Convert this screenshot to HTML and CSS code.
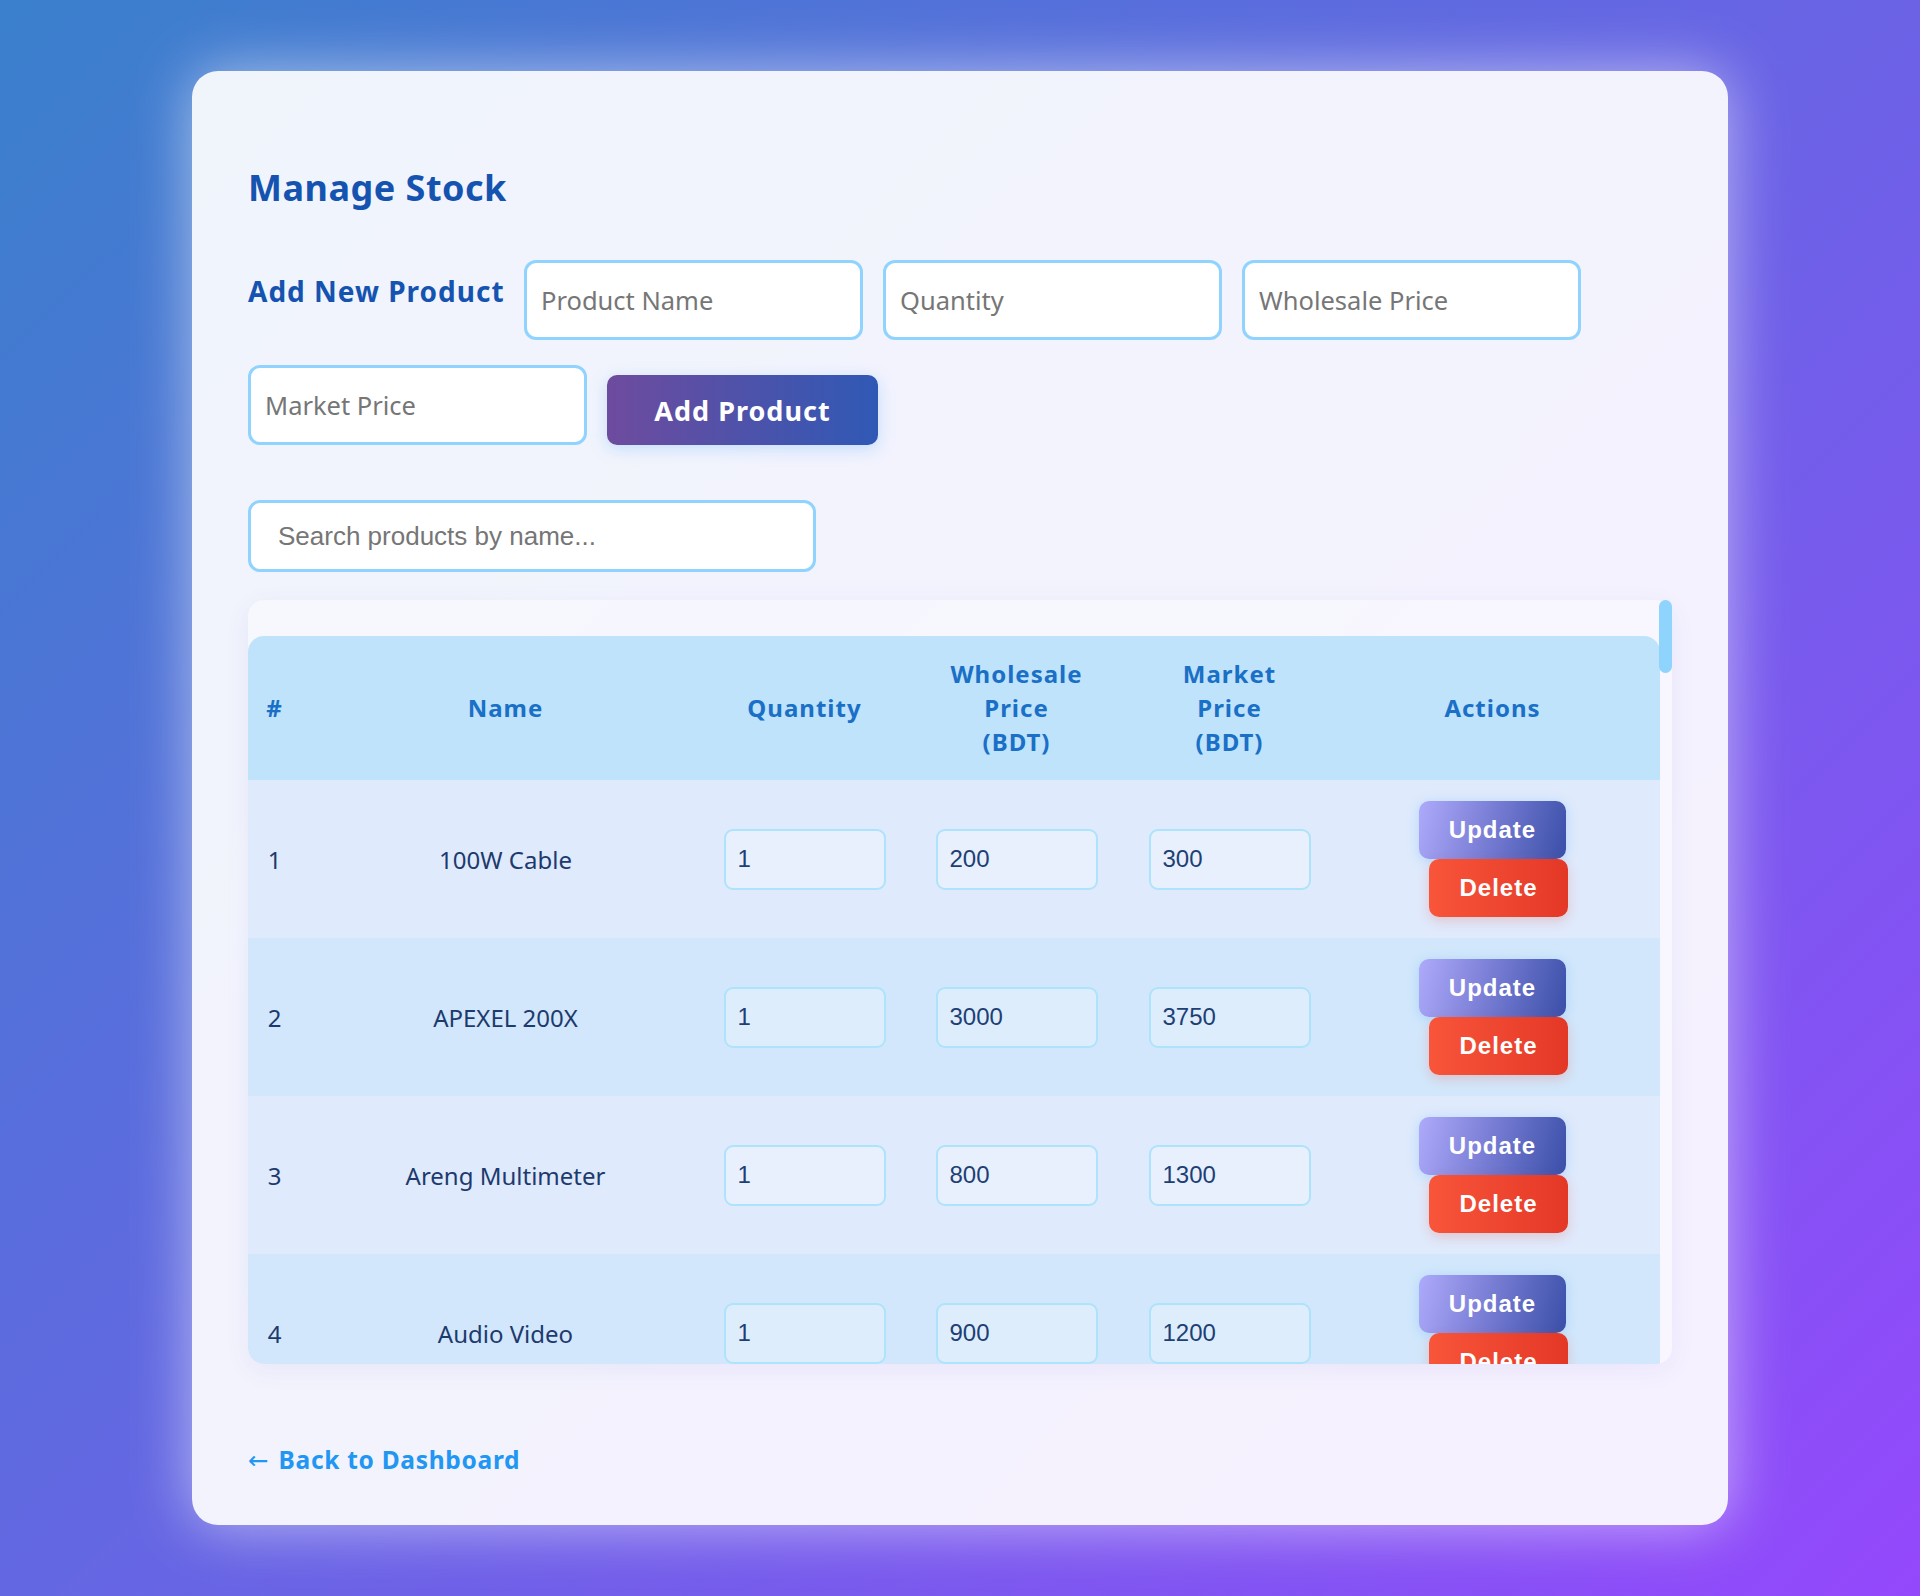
FILE: index.html
```html
<!DOCTYPE html>
<html lang="en">
<head>
<meta charset="utf-8">
<title>Manage Stock</title>
<link rel="stylesheet" href="styles.css">
</head>
<body>
<main class="card">
  <h1 class="title">Manage Stock</h1>

  <form class="add-form">
    <h2 class="add-label">Add New Product</h2>
    <input class="field" type="text" placeholder="Product Name">
    <input class="field" type="text" placeholder="Quantity">
    <input class="field" type="text" placeholder="Wholesale Price">
    <input class="field" type="text" placeholder="Market Price">
    <button class="add-btn" type="button">Add Product</button>
  </form>

  <input class="search" type="text" placeholder="Search products by name...">

  <div class="table-shell">
    <div class="table-wrap">
      <table class="stock-table">
        <colgroup>
          <col class="c-num"><col class="c-name"><col class="c-qty"><col class="c-whole"><col class="c-market"><col class="c-actions">
        </colgroup>
        <thead>
          <tr>
            <th>#</th>
            <th>Name</th>
            <th>Quantity</th>
            <th>Wholesale<br>Price<br>(BDT)</th>
            <th>Market<br>Price<br>(BDT)</th>
            <th>Actions</th>
          </tr>
        </thead>
        <tbody>
          <tr><td>1</td><td>100W Cable</td><td><input class="cell-input" value="1"></td><td><input class="cell-input" value="200"></td><td><input class="cell-input" value="300"></td><td class="act-cell"><div class="actions"><button class="btn btn-update" type="button">Update</button><button class="btn btn-delete" type="button">Delete</button></div></td></tr>
          <tr><td>2</td><td>APEXEL 200X</td><td><input class="cell-input" value="1"></td><td><input class="cell-input" value="3000"></td><td><input class="cell-input" value="3750"></td><td class="act-cell"><div class="actions"><button class="btn btn-update" type="button">Update</button><button class="btn btn-delete" type="button">Delete</button></div></td></tr>
          <tr><td>3</td><td>Areng Multimeter</td><td><input class="cell-input" value="1"></td><td><input class="cell-input" value="800"></td><td><input class="cell-input" value="1300"></td><td class="act-cell"><div class="actions"><button class="btn btn-update" type="button">Update</button><button class="btn btn-delete" type="button">Delete</button></div></td></tr>
          <tr><td>4</td><td>Audio Video</td><td><input class="cell-input" value="1"></td><td><input class="cell-input" value="900"></td><td><input class="cell-input" value="1200"></td><td class="act-cell"><div class="actions"><button class="btn btn-update" type="button">Update</button><button class="btn btn-delete" type="button">Delete</button></div></td></tr>
          <tr><td>5</td><td>Battery Holder 18650</td><td><input class="cell-input" value="4"></td><td><input class="cell-input" value="60"></td><td><input class="cell-input" value="90"></td><td class="act-cell"><div class="actions"><button class="btn btn-update" type="button">Update</button><button class="btn btn-delete" type="button">Delete</button></div></td></tr>
          <tr><td>6</td><td>Bluetooth Module HC-05</td><td><input class="cell-input" value="2"></td><td><input class="cell-input" value="350"></td><td><input class="cell-input" value="450"></td><td class="act-cell"><div class="actions"><button class="btn btn-update" type="button">Update</button><button class="btn btn-delete" type="button">Delete</button></div></td></tr>
          <tr><td>7</td><td>Breadboard 830</td><td><input class="cell-input" value="5"></td><td><input class="cell-input" value="120"></td><td><input class="cell-input" value="180"></td><td class="act-cell"><div class="actions"><button class="btn btn-update" type="button">Update</button><button class="btn btn-delete" type="button">Delete</button></div></td></tr>
          <tr><td>8</td><td>Buck Converter LM2596</td><td><input class="cell-input" value="3"></td><td><input class="cell-input" value="110"></td><td><input class="cell-input" value="160"></td><td class="act-cell"><div class="actions"><button class="btn btn-update" type="button">Update</button><button class="btn btn-delete" type="button">Delete</button></div></td></tr>
          <tr><td>9</td><td>Buzzer 5V</td><td><input class="cell-input" value="10"></td><td><input class="cell-input" value="15"></td><td><input class="cell-input" value="25"></td><td class="act-cell"><div class="actions"><button class="btn btn-update" type="button">Update</button><button class="btn btn-delete" type="button">Delete</button></div></td></tr>
          <tr><td>10</td><td>Capacitor Kit</td><td><input class="cell-input" value="2"></td><td><input class="cell-input" value="250"></td><td><input class="cell-input" value="350"></td><td class="act-cell"><div class="actions"><button class="btn btn-update" type="button">Update</button><button class="btn btn-delete" type="button">Delete</button></div></td></tr>
          <tr><td>11</td><td>DC Jack Female</td><td><input class="cell-input" value="20"></td><td><input class="cell-input" value="10"></td><td><input class="cell-input" value="20"></td><td class="act-cell"><div class="actions"><button class="btn btn-update" type="button">Update</button><button class="btn btn-delete" type="button">Delete</button></div></td></tr>
          <tr><td>12</td><td>DC Motor 12V</td><td><input class="cell-input" value="3"></td><td><input class="cell-input" value="180"></td><td><input class="cell-input" value="250"></td><td class="act-cell"><div class="actions"><button class="btn btn-update" type="button">Update</button><button class="btn btn-delete" type="button">Delete</button></div></td></tr>
          <tr><td>13</td><td>Digital Caliper</td><td><input class="cell-input" value="1"></td><td><input class="cell-input" value="900"></td><td><input class="cell-input" value="1250"></td><td class="act-cell"><div class="actions"><button class="btn btn-update" type="button">Update</button><button class="btn btn-delete" type="button">Delete</button></div></td></tr>
          <tr><td>14</td><td>DS18B20 Sensor</td><td><input class="cell-input" value="4"></td><td><input class="cell-input" value="90"></td><td><input class="cell-input" value="140"></td><td class="act-cell"><div class="actions"><button class="btn btn-update" type="button">Update</button><button class="btn btn-delete" type="button">Delete</button></div></td></tr>
          <tr><td>15</td><td>ESP32 DevKit</td><td><input class="cell-input" value="2"></td><td><input class="cell-input" value="550"></td><td><input class="cell-input" value="750"></td><td class="act-cell"><div class="actions"><button class="btn btn-update" type="button">Update</button><button class="btn btn-delete" type="button">Delete</button></div></td></tr>
          <tr><td>16</td><td>ESP8266 NodeMCU</td><td><input class="cell-input" value="3"></td><td><input class="cell-input" value="380"></td><td><input class="cell-input" value="500"></td><td class="act-cell"><div class="actions"><button class="btn btn-update" type="button">Update</button><button class="btn btn-delete" type="button">Delete</button></div></td></tr>
          <tr><td>17</td><td>Female Header Pins</td><td><input class="cell-input" value="15"></td><td><input class="cell-input" value="12"></td><td><input class="cell-input" value="20"></td><td class="act-cell"><div class="actions"><button class="btn btn-update" type="button">Update</button><button class="btn btn-delete" type="button">Delete</button></div></td></tr>
          <tr><td>18</td><td>Flux Paste</td><td><input class="cell-input" value="2"></td><td><input class="cell-input" value="80"></td><td><input class="cell-input" value="120"></td><td class="act-cell"><div class="actions"><button class="btn btn-update" type="button">Update</button><button class="btn btn-delete" type="button">Delete</button></div></td></tr>
          <tr><td>19</td><td>HDMI Cable</td><td><input class="cell-input" value="2"></td><td><input class="cell-input" value="200"></td><td><input class="cell-input" value="300"></td><td class="act-cell"><div class="actions"><button class="btn btn-update" type="button">Update</button><button class="btn btn-delete" type="button">Delete</button></div></td></tr>
          <tr><td>20</td><td>Heat Shrink Tube</td><td><input class="cell-input" value="5"></td><td><input class="cell-input" value="40"></td><td><input class="cell-input" value="70"></td><td class="act-cell"><div class="actions"><button class="btn btn-update" type="button">Update</button><button class="btn btn-delete" type="button">Delete</button></div></td></tr>
          <tr><td>21</td><td>IR Sensor Module</td><td><input class="cell-input" value="6"></td><td><input class="cell-input" value="45"></td><td><input class="cell-input" value="70"></td><td class="act-cell"><div class="actions"><button class="btn btn-update" type="button">Update</button><button class="btn btn-delete" type="button">Delete</button></div></td></tr>
          <tr><td>22</td><td>Jumper Wire Set</td><td><input class="cell-input" value="4"></td><td><input class="cell-input" value="90"></td><td><input class="cell-input" value="140"></td><td class="act-cell"><div class="actions"><button class="btn btn-update" type="button">Update</button><button class="btn btn-delete" type="button">Delete</button></div></td></tr>
          <tr><td>23</td><td>LCD 16x2 Display</td><td><input class="cell-input" value="2"></td><td><input class="cell-input" value="220"></td><td><input class="cell-input" value="300"></td><td class="act-cell"><div class="actions"><button class="btn btn-update" type="button">Update</button><button class="btn btn-delete" type="button">Delete</button></div></td></tr>
          <tr><td>24</td><td>LED Pack 5mm</td><td><input class="cell-input" value="8"></td><td><input class="cell-input" value="50"></td><td><input class="cell-input" value="80"></td><td class="act-cell"><div class="actions"><button class="btn btn-update" type="button">Update</button><button class="btn btn-delete" type="button">Delete</button></div></td></tr>
          <tr><td>25</td><td>Li-ion Charger TP4056</td><td><input class="cell-input" value="6"></td><td><input class="cell-input" value="35"></td><td><input class="cell-input" value="60"></td><td class="act-cell"><div class="actions"><button class="btn btn-update" type="button">Update</button><button class="btn btn-delete" type="button">Delete</button></div></td></tr>
          <tr><td>26</td><td>Logic Analyzer</td><td><input class="cell-input" value="1"></td><td><input class="cell-input" value="700"></td><td><input class="cell-input" value="950"></td><td class="act-cell"><div class="actions"><button class="btn btn-update" type="button">Update</button><button class="btn btn-delete" type="button">Delete</button></div></td></tr>
          <tr><td>27</td><td>Micro USB Cable</td><td><input class="cell-input" value="5"></td><td><input class="cell-input" value="60"></td><td><input class="cell-input" value="100"></td><td class="act-cell"><div class="actions"><button class="btn btn-update" type="button">Update</button><button class="btn btn-delete" type="button">Delete</button></div></td></tr>
          <tr><td>28</td><td>Mini Drill</td><td><input class="cell-input" value="1"></td><td><input class="cell-input" value="650"></td><td><input class="cell-input" value="900"></td><td class="act-cell"><div class="actions"><button class="btn btn-update" type="button">Update</button><button class="btn btn-delete" type="button">Delete</button></div></td></tr>
          <tr><td>29</td><td>OLED 0.96 Display</td><td><input class="cell-input" value="3"></td><td><input class="cell-input" value="260"></td><td><input class="cell-input" value="350"></td><td class="act-cell"><div class="actions"><button class="btn btn-update" type="button">Update</button><button class="btn btn-delete" type="button">Delete</button></div></td></tr>
          <tr><td>30</td><td>Power Bank Module</td><td><input class="cell-input" value="2"></td><td><input class="cell-input" value="150"></td><td><input class="cell-input" value="220"></td><td class="act-cell"><div class="actions"><button class="btn btn-update" type="button">Update</button><button class="btn btn-delete" type="button">Delete</button></div></td></tr>
          <tr><td>31</td><td>Relay Module 5V</td><td><input class="cell-input" value="4"></td><td><input class="cell-input" value="80"></td><td><input class="cell-input" value="120"></td><td class="act-cell"><div class="actions"><button class="btn btn-update" type="button">Update</button><button class="btn btn-delete" type="button">Delete</button></div></td></tr>
          <tr><td>32</td><td>Resistor Kit</td><td><input class="cell-input" value="2"></td><td><input class="cell-input" value="200"></td><td><input class="cell-input" value="280"></td><td class="act-cell"><div class="actions"><button class="btn btn-update" type="button">Update</button><button class="btn btn-delete" type="button">Delete</button></div></td></tr>
          <tr><td>33</td><td>Servo Motor SG90</td><td><input class="cell-input" value="4"></td><td><input class="cell-input" value="130"></td><td><input class="cell-input" value="190"></td><td class="act-cell"><div class="actions"><button class="btn btn-update" type="button">Update</button><button class="btn btn-delete" type="button">Delete</button></div></td></tr>
          <tr><td>34</td><td>Soldering Iron 60W</td><td><input class="cell-input" value="2"></td><td><input class="cell-input" value="450"></td><td><input class="cell-input" value="650"></td><td class="act-cell"><div class="actions"><button class="btn btn-update" type="button">Update</button><button class="btn btn-delete" type="button">Delete</button></div></td></tr>
          <tr><td>35</td><td>Solder Wire</td><td><input class="cell-input" value="3"></td><td><input class="cell-input" value="180"></td><td><input class="cell-input" value="250"></td><td class="act-cell"><div class="actions"><button class="btn btn-update" type="button">Update</button><button class="btn btn-delete" type="button">Delete</button></div></td></tr>
          <tr><td>36</td><td>Step Down Module</td><td><input class="cell-input" value="5"></td><td><input class="cell-input" value="70"></td><td><input class="cell-input" value="110"></td><td class="act-cell"><div class="actions"><button class="btn btn-update" type="button">Update</button><button class="btn btn-delete" type="button">Delete</button></div></td></tr>
          <tr><td>37</td><td>Push Button Switch</td><td><input class="cell-input" value="20"></td><td><input class="cell-input" value="5"></td><td><input class="cell-input" value="10"></td><td class="act-cell"><div class="actions"><button class="btn btn-update" type="button">Update</button><button class="btn btn-delete" type="button">Delete</button></div></td></tr>
          <tr><td>38</td><td>Temperature Sensor</td><td><input class="cell-input" value="3"></td><td><input class="cell-input" value="95"></td><td><input class="cell-input" value="150"></td><td class="act-cell"><div class="actions"><button class="btn btn-update" type="button">Update</button><button class="btn btn-delete" type="button">Delete</button></div></td></tr>
          <tr><td>39</td><td>Tweezers Set</td><td><input class="cell-input" value="2"></td><td><input class="cell-input" value="120"></td><td><input class="cell-input" value="180"></td><td class="act-cell"><div class="actions"><button class="btn btn-update" type="button">Update</button><button class="btn btn-delete" type="button">Delete</button></div></td></tr>
          <tr><td>40</td><td>Type-C Cable</td><td><input class="cell-input" value="6"></td><td><input class="cell-input" value="120"></td><td><input class="cell-input" value="180"></td><td class="act-cell"><div class="actions"><button class="btn btn-update" type="button">Update</button><button class="btn btn-delete" type="button">Delete</button></div></td></tr>
          <tr><td>41</td><td>Ultrasonic Sensor</td><td><input class="cell-input" value="3"></td><td><input class="cell-input" value="110"></td><td><input class="cell-input" value="160"></td><td class="act-cell"><div class="actions"><button class="btn btn-update" type="button">Update</button><button class="btn btn-delete" type="button">Delete</button></div></td></tr>
          <tr><td>42</td><td>USB Hub 4 Port</td><td><input class="cell-input" value="2"></td><td><input class="cell-input" value="300"></td><td><input class="cell-input" value="420"></td><td class="act-cell"><div class="actions"><button class="btn btn-update" type="button">Update</button><button class="btn btn-delete" type="button">Delete</button></div></td></tr>
          <tr><td>43</td><td>USB Power Meter</td><td><input class="cell-input" value="2"></td><td><input class="cell-input" value="400"></td><td><input class="cell-input" value="550"></td><td class="act-cell"><div class="actions"><button class="btn btn-update" type="button">Update</button><button class="btn btn-delete" type="button">Delete</button></div></td></tr>
          <tr><td>44</td><td>Voltage Regulator 7805</td><td><input class="cell-input" value="10"></td><td><input class="cell-input" value="12"></td><td><input class="cell-input" value="20"></td><td class="act-cell"><div class="actions"><button class="btn btn-update" type="button">Update</button><button class="btn btn-delete" type="button">Delete</button></div></td></tr>
          <tr><td>45</td><td>Voltmeter Display</td><td><input class="cell-input" value="3"></td><td><input class="cell-input" value="140"></td><td><input class="cell-input" value="200"></td><td class="act-cell"><div class="actions"><button class="btn btn-update" type="button">Update</button><button class="btn btn-delete" type="button">Delete</button></div></td></tr>
          <tr><td>46</td><td>Wire Stripper</td><td><input class="cell-input" value="2"></td><td><input class="cell-input" value="250"></td><td><input class="cell-input" value="350"></td><td class="act-cell"><div class="actions"><button class="btn btn-update" type="button">Update</button><button class="btn btn-delete" type="button">Delete</button></div></td></tr>
          <tr><td>47</td><td>Wireless Charger</td><td><input class="cell-input" value="1"></td><td><input class="cell-input" value="600"></td><td><input class="cell-input" value="850"></td><td class="act-cell"><div class="actions"><button class="btn btn-update" type="button">Update</button><button class="btn btn-delete" type="button">Delete</button></div></td></tr>
          <tr><td>48</td><td>XT60 Connector</td><td><input class="cell-input" value="8"></td><td><input class="cell-input" value="30"></td><td><input class="cell-input" value="50"></td><td class="act-cell"><div class="actions"><button class="btn btn-update" type="button">Update</button><button class="btn btn-delete" type="button">Delete</button></div></td></tr>
          <tr><td>49</td><td>Zener Diode Kit</td><td><input class="cell-input" value="2"></td><td><input class="cell-input" value="150"></td><td><input class="cell-input" value="220"></td><td class="act-cell"><div class="actions"><button class="btn btn-update" type="button">Update</button><button class="btn btn-delete" type="button">Delete</button></div></td></tr>
        </tbody>
      </table>
    </div>
    <span class="scroll-thumb" aria-hidden="true"></span>
  </div>

  <p class="back-wrap"><a class="back" href="#"><span class="arrow">←</span> Back to Dashboard</a></p>
</main>
</body>
</html>
```

FILE: styles.css
```css
* {
  box-sizing: border-box;
}

html,
body {
  margin: 0;
}

body {
  min-height: 100vh;
  padding: 71px 0 73px;
  background: linear-gradient(135deg, #3a80cc 0%, #6765e4 50%, #9448fc 100%);
  font-family: "Noto Sans", "Open Sans", sans-serif;
}

.card {
  width: 80%;
  margin: 0 auto;
  padding: 95px 56px 46px;
  background: rgba(255, 255, 255, 0.92);
  border-radius: 26px;
  box-shadow: 0 0 60px rgba(255, 255, 255, 0.55);
}

.title {
  margin: 0;
  font-size: 36px;
  line-height: 44px;
  font-weight: 700;
  letter-spacing: 0.5px;
  color: #1553b0;
}

.add-form {
  display: flex;
  flex-wrap: wrap;
  column-gap: 20px;
  row-gap: 25px;
  margin-top: 50px;
}

.add-label {
  align-self: flex-start;
  width: 256px;
  margin: 14px 0 0;
  white-space: nowrap;
  font-size: 28px;
  line-height: 34px;
  font-weight: 700;
  letter-spacing: 1px;
  color: #1553b0;
}

.field {
  width: 339px;
  height: 80px;
  padding: 0 14px;
  border: 3px solid #8fd3fe;
  border-radius: 12px;
  background: #fff;
  font-family: inherit;
  font-size: 25.5px;
  color: #1a3a6b;
  outline: none;
}

.field::placeholder {
  color: #767676;
}

.add-btn {
  align-self: flex-end;
  width: 271px;
  height: 70px;
  border: none;
  border-radius: 10px;
  background: linear-gradient(90deg, #6e4b9e 0%, #2f59b5 100%);
  box-shadow: 0 4px 16px rgba(110, 180, 255, 0.35);
  color: #fff;
  font-family: inherit;
  font-size: 27px;
  font-weight: 700;
  letter-spacing: 1px;
  cursor: pointer;
}

.search {
  display: block;
  width: 568px;
  height: 72px;
  margin-top: 55px;
  padding: 0 27px;
  border: 3px solid #8fd3fe;
  border-radius: 12px;
  background: #fff;
  font-family: "Liberation Sans", Arial, sans-serif;
  font-size: 26px;
  color: #1a3a6b;
  outline: none;
}

.search::placeholder {
  color: #767676;
}

.table-shell {
  position: relative;
  margin-top: 28px;
}

.table-wrap {
  height: 764px;
  padding-top: 36px;
  overflow-y: auto;
  border-radius: 16px;
  background: rgba(255, 255, 255, 0.35);
  box-shadow: 0 6px 24px rgba(90, 90, 200, 0.08);
}

.scroll-thumb {
  position: absolute;
  top: 0;
  right: 0;
  width: 13px;
  height: 73px;
  border-radius: 7px;
  background: #8fd4fd;
}

.stock-table {
  width: 1412px;
  table-layout: fixed;
  border-collapse: separate;
  border-spacing: 0;
}

.c-num { width: 53px; }
.c-name { width: 409px; }
.c-qty { width: 189px; }
.c-whole { width: 235px; }
.c-market { width: 191px; }
.c-actions { width: 335px; }

.stock-table th {
  padding: 21px 10px;
  background: #bee3fb;
  color: #1a6fc6;
  font-size: 24px;
  line-height: 34px;
  font-weight: 700;
  letter-spacing: 1px;
  text-align: center;
  vertical-align: middle;
}

.stock-table th:first-child {
  border-top-left-radius: 16px;
}

.stock-table th:last-child {
  border-top-right-radius: 16px;
}

.stock-table td {
  padding: 21px 6px;
  color: #1d3a6e;
  font-size: 24px;
  text-align: center;
  vertical-align: middle;
}

.stock-table td.act-cell {
  padding: 21px 19px;
}

.stock-table tbody tr:nth-child(odd) td {
  background: #dfeafc;
}

.stock-table tbody tr:nth-child(even) td {
  background: #d2e7fb;
}

.cell-input {
  width: 162px;
  height: 61px;
  padding: 0 12px;
  border: 2px solid #ade3fb;
  border-radius: 9px;
  background: rgba(255, 255, 255, 0.28);
  font-family: "Liberation Sans", Arial, sans-serif;
  font-size: 24px;
  color: #1d3f74;
  outline: none;
}

.actions {
  display: flex;
  flex-wrap: wrap;
  justify-content: center;
}

.btn {
  padding: 15px 30px;
  border: none;
  border-radius: 10px;
  color: #fff;
  font-family: "Liberation Sans", Arial, sans-serif;
  font-size: 24px;
  line-height: 28px;
  font-weight: 700;
  letter-spacing: 1px;
  cursor: pointer;
}

.btn-update {
  background: linear-gradient(105deg, #aeaafb 0%, #7b7fd6 45%, #3a4fa8 100%);
  box-shadow: 0 2px 12px rgba(120, 190, 255, 0.45);
}

.btn-delete {
  margin-left: 12px;
  background: linear-gradient(90deg, #f8553a 0%, #e43827 100%);
  box-shadow: 0 4px 12px rgba(230, 70, 50, 0.22);
}

.back-wrap {
  margin: 80px 0 0;
  line-height: 32px;
}

.back {
  font-size: 24.5px;
  font-weight: 700;
  letter-spacing: 0.7px;
  color: #2196f3;
  text-decoration: none;
}

.arrow {
  margin-right: 3px;
  font-family: "DejaVu Sans", sans-serif;
  font-weight: 400;
  letter-spacing: 0;
}
```
